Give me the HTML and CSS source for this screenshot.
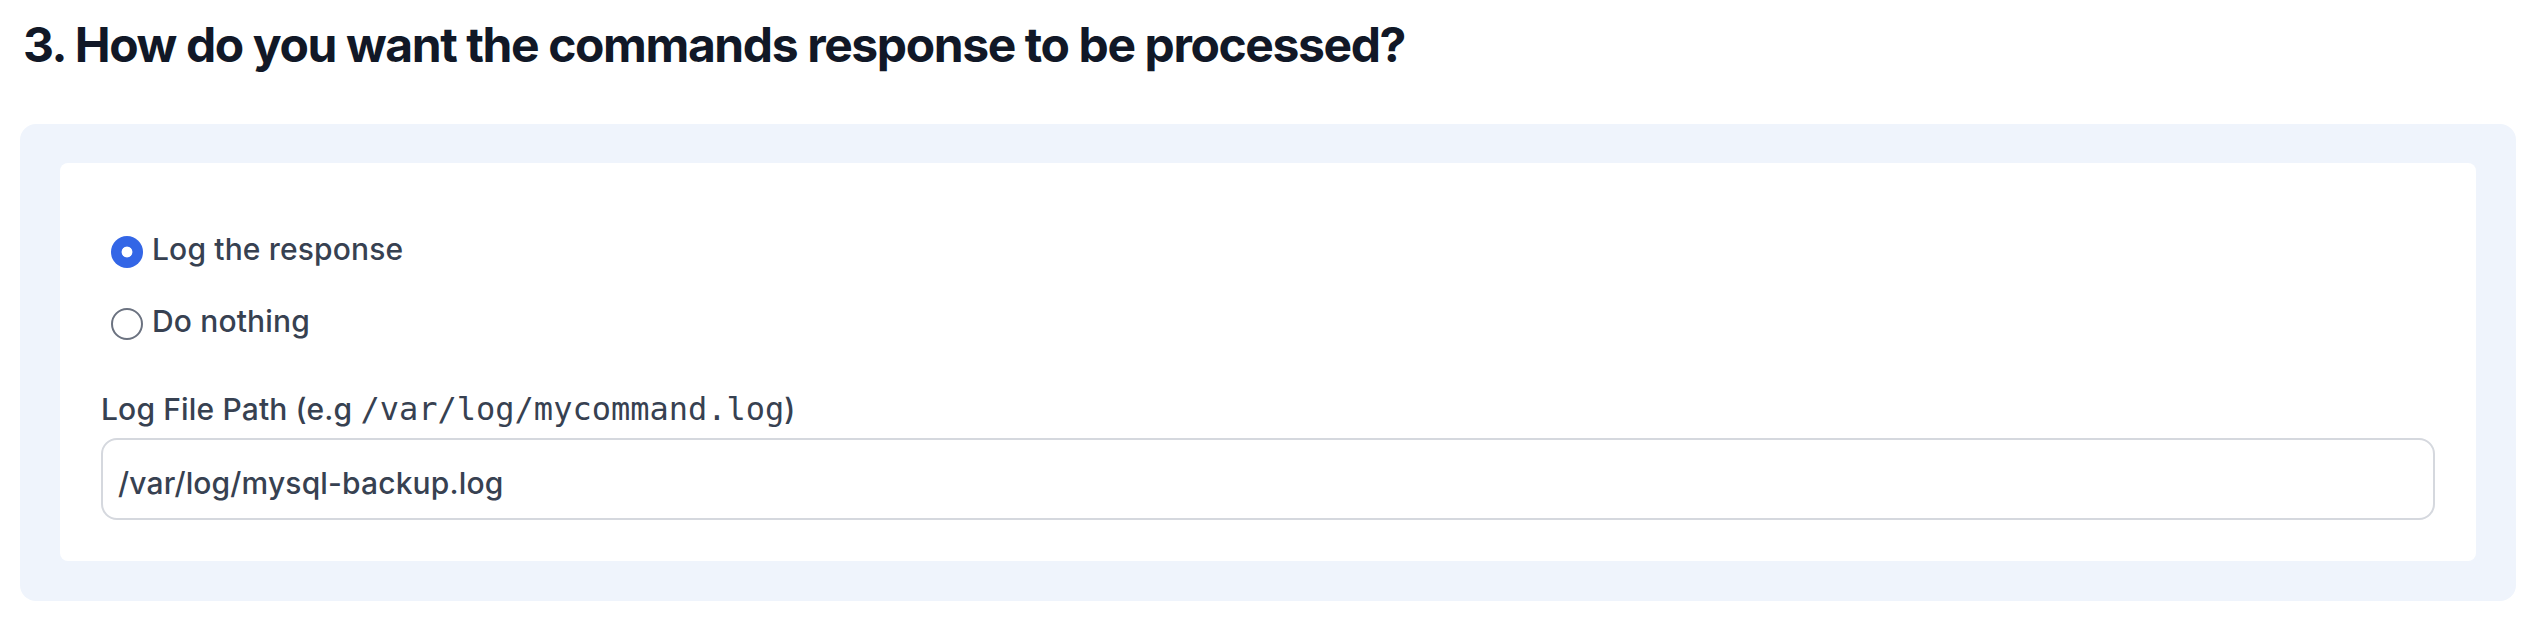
FILE: index.html
```html
<!DOCTYPE html>
<html lang="en">
<head>
<meta charset="UTF-8">
<meta name="viewport" content="width=device-width, initial-scale=1.0">
<title>Command response</title>
<link rel="stylesheet" href="styles.css">
</head>
<body>

<h2 class="step-title">3. How do you want the commands response to be processed?</h2>

<div class="panel">
    <div class="card">
        <div class="radio-list">
            <label class="radio-row">
                <input type="radio" name="response" value="log" checked>
                <span>Log the response</span>
            </label>
            <label class="radio-row">
                <input type="radio" name="response" value="nothing">
                <span>Do nothing</span>
            </label>
        </div>

        <label class="field-label" for="log-path">Log File Path (e.g <code>/var/log/mycommand.log</code>)</label>
        <input class="text-input" id="log-path" type="text" value="/var/log/mysql-backup.log">
    </div>
</div>

</body>
</html>
```

FILE: styles.css
```css
body {
    margin: 0;
    padding: 0 22px 0 20px;
    background: #ffffff;
    font-family: Inter, "Noto Sans", sans-serif;
    color: #374151;
}

.step-title {
    margin: 0;
    padding: 16px 0 0 3px;
    font-size: 48px;
    line-height: 57.6px;
    font-weight: 700;
    letter-spacing: -1.4px;
    color: #111827;
}

.panel {
    margin-top: 50px;
    padding: 39px 40px 40px;
    background-color: #eff4fc;
    border-radius: 16px;
}

.card {
    background-color: #ffffff;
    border-radius: 8px;
    padding: 64px 41px 41px 41px;
}

.radio-list {
    display: flex;
    flex-direction: column;
    gap: 28px;
    padding: 0 0 0 10px;
}

.radio-row {
    display: flex;
    align-items: flex-start;
    gap: 9px;
    font-size: 30px;
    font-weight: 500;
    line-height: 44px;
    letter-spacing: 0.15px;
    cursor: pointer;
}

.radio-row input {
    appearance: none;
    -webkit-appearance: none;
    margin: 9px 0 0 0;
    width: 32px;
    height: 32px;
    border: 2px solid #6b7280;
    border-radius: 50%;
    background: #ffffff;
    flex-shrink: 0;
}

.radio-row input:checked {
    border: none;
    background: radial-gradient(circle, #ffffff 0 5px, #3366e6 5.8px);
}

.field-label {
    display: block;
    margin-top: 44px;
    font-size: 30px;
    font-weight: 500;
    line-height: 44px;
    letter-spacing: 0.15px;
}

.field-label code {
    font-family: "DejaVu Sans Mono", "Liberation Mono", monospace;
    font-size: 32px;
    font-weight: 400;
    letter-spacing: 0;
}

.text-input {
    display: block;
    box-sizing: border-box;
    width: 100%;
    height: 82px;
    margin-top: 7px;
    padding: 9px 15px 0;
    border: 2px solid #d5d8de;
    border-radius: 16px;
    font-family: Inter, "Noto Sans", sans-serif;
    font-size: 30px;
    font-weight: 500;
    letter-spacing: 0.15px;
    color: #374151;
    background: #ffffff;
}
```
